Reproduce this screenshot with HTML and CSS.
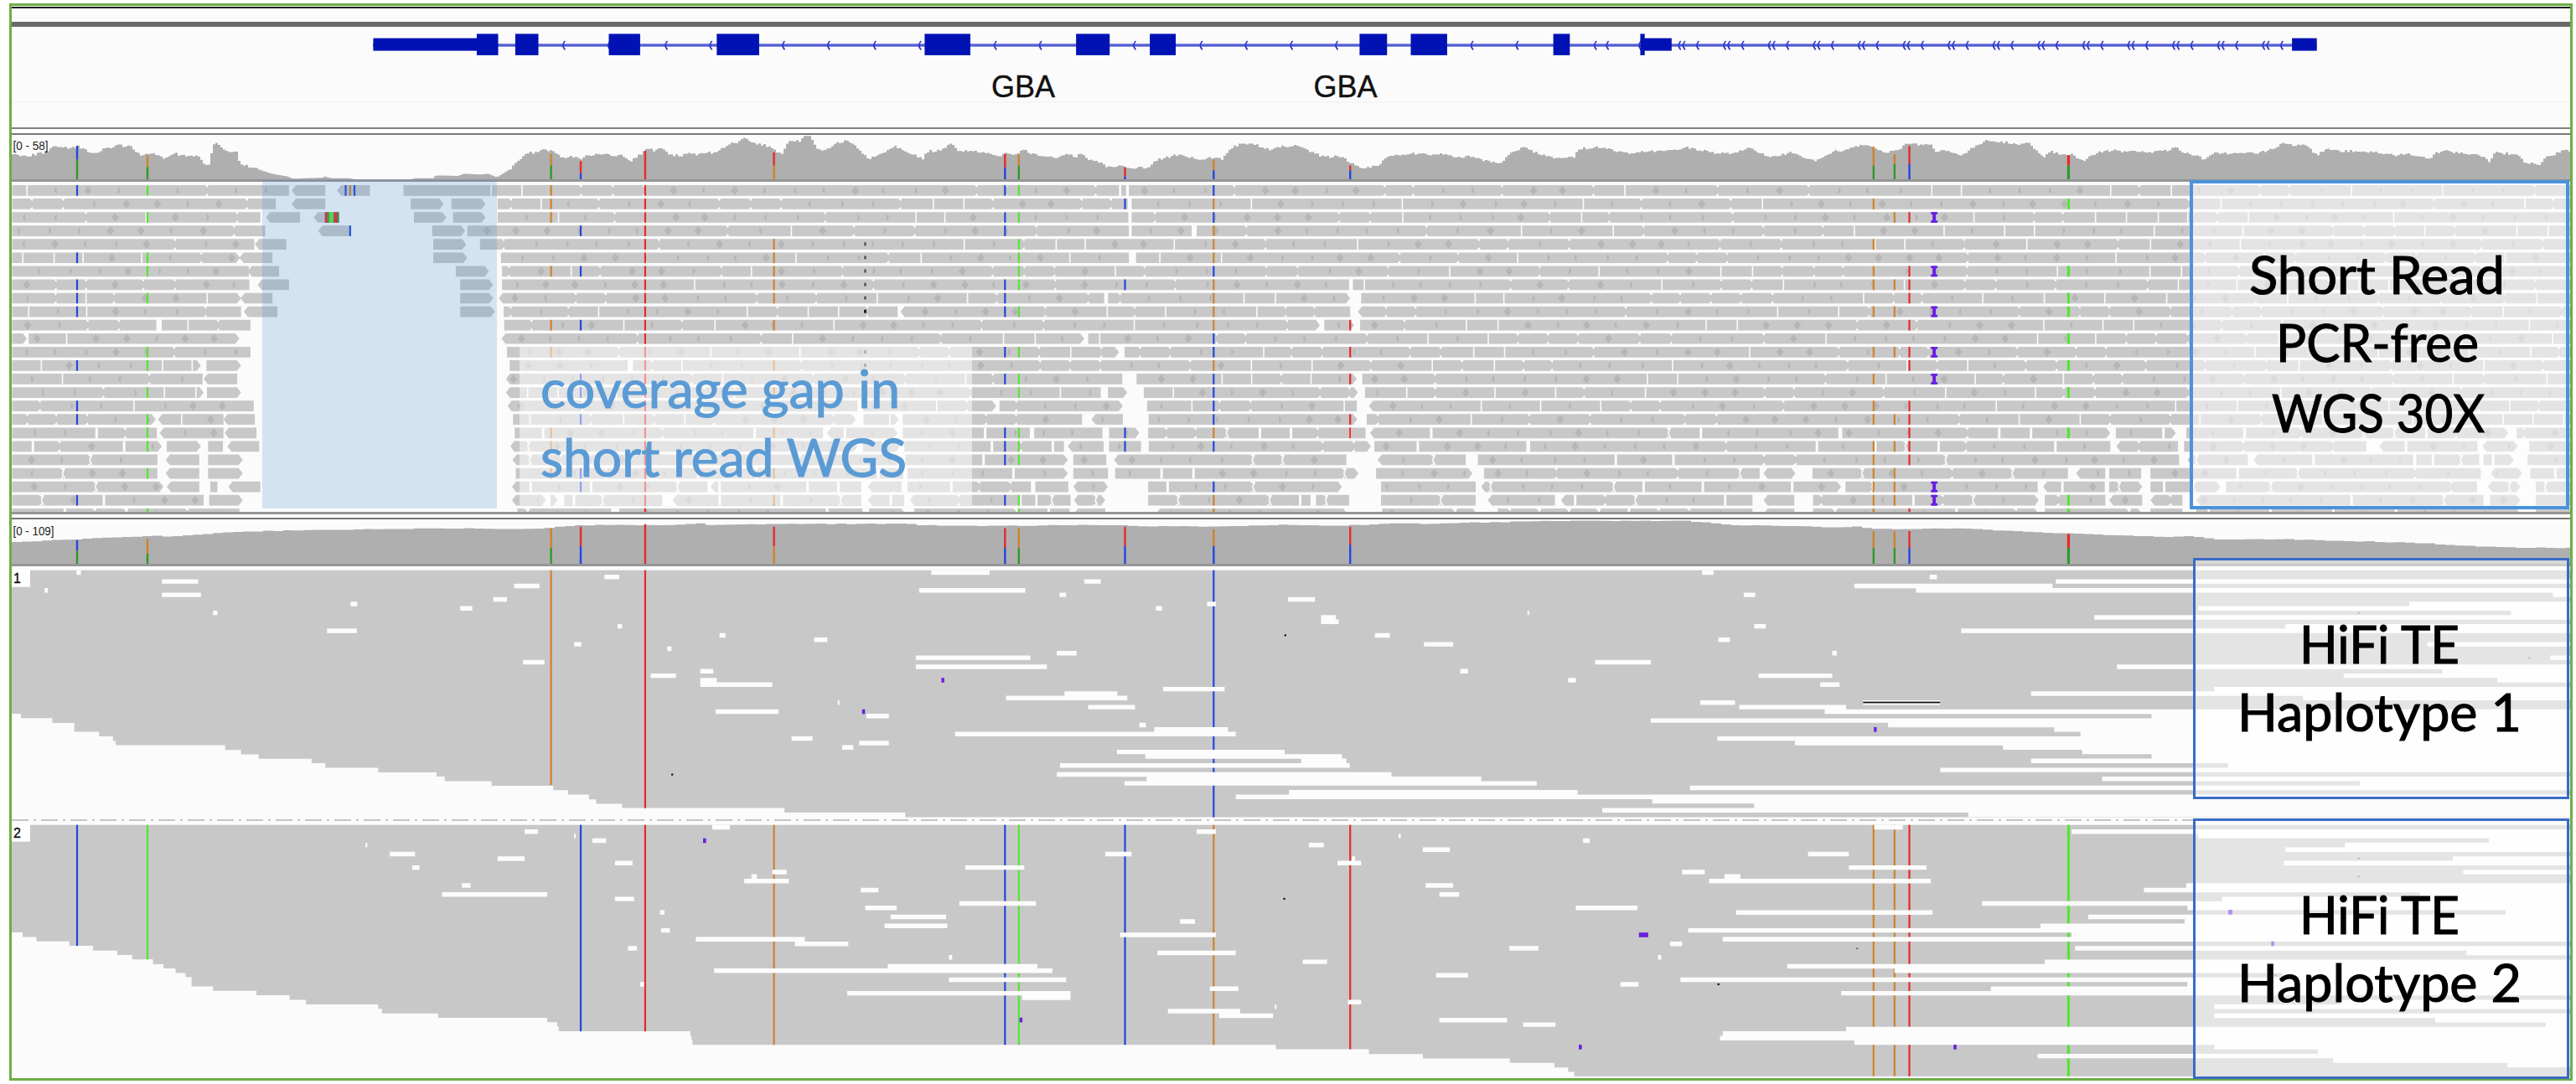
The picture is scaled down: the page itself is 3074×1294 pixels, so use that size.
FILE: index.html
```html
<!DOCTYPE html>
<html lang="en">
<head>
<meta charset="utf-8">
<title>GBA coverage</title>
<link rel="stylesheet" href="styles.css">
</head>
<body>
<main class="viewer">
  <div class="ruler"></div>
  <section class="genes"><svg id="genes" viewBox="14 32 3053 120"></svg></section>
  <section class="coverage"><svg id="cov-short" viewBox="14 161 3053 53"></svg></section>
  <section class="reads"><svg id="reads" viewBox="14 217 3053 394"></svg></section>
  <section class="coverage coverage-hifi"><svg id="cov-hifi" viewBox="14 620 3053 53"></svg></section>
  <section class="haplotype"><svg id="hap1" viewBox="14 676 3053 304"></svg></section>
  <section class="haplotype"><svg id="hap2" viewBox="14 980 3053 307"></svg></section>

  <div class="gap-shade"></div>
  <div class="note note-gap">
    <svg viewBox="620 413 540 190">
      <text x="645" y="487" textLength="429" lengthAdjust="spacingAndGlyphs">coverage gap in</text>
      <text x="645" y="569" textLength="437" lengthAdjust="spacingAndGlyphs">short read WGS</text>
    </svg>
  </div>
  <div class="note note-short">
    <svg viewBox="2617 219 445 385">
      <text x="2684" y="351" textLength="305" lengthAdjust="spacingAndGlyphs">Short Read</text>
      <text x="2716" y="432" textLength="242" lengthAdjust="spacingAndGlyphs">PCR-free</text>
      <text x="2711" y="516" textLength="254" lengthAdjust="spacingAndGlyphs">WGS 30X</text>
    </svg>
  </div>
  <div class="note note-hap note-hap1">
    <svg viewBox="2620 669 443 282">
      <text x="2744" y="792" textLength="191" lengthAdjust="spacingAndGlyphs">HiFi TE</text>
      <text x="2670" y="873" textLength="339" lengthAdjust="spacingAndGlyphs">Haplotype 1</text>
    </svg>
  </div>
  <div class="note note-hap note-hap2">
    <svg viewBox="2620 980 443 305">
      <text x="2744" y="1114.5" textLength="191" lengthAdjust="spacingAndGlyphs">HiFi TE</text>
      <text x="2670" y="1195.5" textLength="339" lengthAdjust="spacingAndGlyphs">Haplotype 2</text>
    </svg>
  </div>
</main>
<script src="tracks.js"></script>
</body>
</html>
```

FILE: styles.css
```css
* { box-sizing: border-box; }

body {
  margin: 0;
  background: #fff;
  font-family: "Liberation Sans", Arial, sans-serif;
}

svg { display: block; width: 100%; height: 100%; }

.viewer {
  position: relative;
  display: flex;
  flex-direction: column;
  width: 3059px;
  height: 1286px;
  margin: 4px 0 0 11px;
  border: 3px solid #6fae45;
  background: #fff;
}

.ruler {
  height: 24px;
  margin-top: 1px;
  border-top: 2px solid #111;
  border-bottom: 6px solid #6a6a6a;
  background: #fbfbfb;
}

.genes {
  height: 122px;
  border-bottom: 2px solid #808080;
  background: #fbfbfb;
}

.coverage {
  height: 58px;
  margin-top: 5px;
  border-top: 2px solid #777;
  border-bottom: 3px solid #969696;
  background: #fbfbfb;
}

.coverage-hifi { margin-top: 4px; }

.reads {
  height: 397px;
  border-bottom: 3px solid #969696;
  background: #fbfbfb;
}

.haplotype { flex: 304 0 0; background: #fbfbfb; }
.haplotype + .haplotype { flex-grow: 307; }

.gene-name { font-size: 36.5px; fill: #111; stroke: #111; stroke-width: 0.4px; }
.range { font-size: 14px; fill: #222; }
.group { font-size: 16px; fill: #111; stroke: #111; stroke-width: 0.4px; }

/* Callouts lie over the tracks */
.gap-shade {
  position: absolute;
  left: 299px;
  top: 208px;
  width: 280px;
  height: 392px;
  background: rgba(62, 137, 210, 0.2);
}

.note {
  position: absolute;
  background: rgba(255, 255, 255, 0.5);
  font-family: Lato, Carlito, sans-serif;
  font-size: 61px;
  fill: #000;
  stroke: #000;
  stroke-width: 1.1px;
}

.note-gap {
  left: 606px;
  top: 406px;
  width: 540px;
  height: 190px;
  fill: #5b9bd5;
  stroke: #5b9bd5;
}

.note-short {
  left: 2599px;
  top: 208px;
  width: 453px;
  height: 393px;
  border: 4px solid #4a93dc;
}

.note-hap {
  left: 2603px;
  width: 449px;
  border: 3px solid #3a6bc5;
}

.note-hap1 { top: 659px; height: 288px; }
.note-hap2 { top: 970px; height: 311px; }
```

FILE: tracks.js
```javascript
// Positions are stored per window of the locus (a, b, c), in window units.
const UNIT = 0.6569;
const START = { a: 0, b: 1020, c: 2044 };
const px = (win, v) => START[win] + v * UNIT;
const COLORS = { r: '#e8292b', g: '#2f9a2a', b: '#2446e0', o: '#cf822c', l: '#55e534' };
const LEFT = 14, RIGHT = 3067;

const rect = (x, y, w, h, fill) =>
  `<rect x="${x.toFixed(1)}" y="${y.toFixed(1)}" width="${w.toFixed(1)}" height="${h.toFixed(1)}" fill="${fill}"/>`;
const path = (d, fill) => `<path d="${d}" fill="${fill}"/>`;
const label = (x, y, w, cls, s) =>
  `<text x="${x}" y="${y}" class="${cls}"${w ? ` textLength="${w}" lengthAdjust="spacingAndGlyphs"` : ''}>${s}</text>`;
const put = (id, html) => { document.getElementById(id).innerHTML = html; };

let seed = 7;
const rnd = () => { seed = (seed * 1103515245 + 12345) % 2147483648; return seed / 2147483648; };

// ---------- gene model ----------
(function genes() {
  let s = rect(LEFT, 121.5, RIGHT - LEFT, 1, '#efefef');
  s += rect(445, 52.3, px('c', 1097) - 445, 3.4, '#5560d4');
  const arrows = { a: [1021, 1103, 1207, 1288, 1420, 1502],
    b: [33, 115, 252, 334, 505, 626, 708, 790, 872, 1118, 1200, 1342, 1364, 1423, 1495, 1503, 1528], c: [] };
  for (let k = 0; k < 13; k++) arrows.c.push(18 + 81.6 * k, 26 + 81.6 * k, 51 + 81.6 * k);
  for (const w in arrows) for (const v of arrows[w]) {
    const x = px(w, v);
    s += `<path d="M${x + 3.6} 49 Q${x - 1.4} 54 ${x + 3.6} 59.5" fill="none" stroke="#2a36c4" stroke-width="1.7"/>`;
  }
  const utr = [['a', 678, 870], ['b', 1433, 1484], ['c', 1052, 1097]];
  const exons = [['a', 866, 905], ['a', 936, 978], ['a', 1106, 1163], ['a', 1302, 1379], ['b', 127, 210],
    ['b', 402, 463], ['b', 536, 583], ['b', 917, 967], ['b', 1010, 1076], ['b', 1269, 1299], ['b', 1427, 1435]];
  for (const [w, p, q] of utr) s += rect(px(w, p), 45.6, (q - p) * UNIT, 15, '#0012b4');
  for (const [w, p, q] of exons) s += rect(px(w, p), 40.4, (q - p) * UNIT, 25.5, '#0012b4');
  s += label(1183, 115.7, 76, 'gene-name', 'GBA') + label(1567.5, 115.7, 76, 'gene-name', 'GBA');
  put('genes', s);
})();

// ---------- coverage ----------
function profile(text, toY) {
  const pts = [];
  for (const part of text.trim().split('|')) {
    const [w, body] = part.trim().split('=');
    for (const p of body.trim().split(/\s+/)) { const [v, y] = p.split(':').map(Number); pts.push([px(w, v), toY(y)]); }
  }
  return pts;
}
function area(pts, base, step, noise) {
  let d = `M${LEFT} ${base}`, k = 0;
  for (let x = LEFT; x < RIGHT; x += step) {
    while (k < pts.length - 2 && pts[k + 1][0] < x) k++;
    const [x0, y0] = pts[k], [x1, y1] = pts[k + 1];
    const t = Math.min(1, Math.max(0, (x - x0) / (x1 - x0 || 1)));
    let y = y0 + (y1 - y0) * t;
    if (base - y > 12) y += (rnd() - 0.5) * noise;
    d += `V${y.toFixed(1)}H${Math.min(x + step, RIGHT)}`;
  }
  return path(d + `V${base}Z`, '#afafaf');
}
function alleles(list, toY, base) {
  let s = '';
  for (const [w, v, top, c1, mid, c2] of list) {
    const wd = w === 'c' && v === 646 ? 3.2 : 2.4, x = px(w, v) - wd / 2, yt = toY(top), ym = mid ? toY(mid) : base;
    s += rect(x, yt, wd, ym - yt, COLORS[c1]);
    if (mid) s += rect(x, ym, wd, base - ym, COLORS[c2]);
  }
  return s;
}

const shortProfile = profile(`
a= 22:552 50:558 66:550 85:543 98:522 110:524 120:532 140:525 160:545 175:545 190:532 205:528 213:515 225:525 235:522 245:545 255:555 275:548 295:568 310:556 316:548 325:558 350:556 360:562 368:585 378:592 381:590 383:520 388:514 400:525 412:545 428:545 435:590 455:598 475:612 495:624 520:632 530:640 585:636 588:632 600:638 635:638 640:643 745:643 750:638 785:638 790:628 830:630 840:622 870:625 885:622 900:635 905:630 925:605 945:565 960:547 975:545 985:530 1005:545 1020:565 1035:558 1055:568 1065:555 1080:553 1095:556 1105:550 1112:562 1125:555 1145:575 1165:548 1175:530 1185:540 1200:530 1215:552 1235:560 1250:545 1260:555 1280:545 1300:548 1320:518 1335:512 1350:496 1370:515 1390:520 1410:545 1420:550 1430:510 1450:505 1460:490 1470:488 1480:525 1495:542 1515:515 1535:505 1550:520
| b= 0:525 25:570 45:550 70:522 90:538 110:560 122:570 130:542 155:540 173:515 185:538 210:540 240:552 258:560 275:545 290:552 308:536 320:553 345:558 360:568 380:553 400:560 410:552 430:578 445:582 458:598 480:590 500:603 530:598 550:570 580:556 605:562 630:575 640:565 665:570 680:530 700:515 730:520 752:538 775:525 800:522 820:540 850:562 880:560 900:582 920:602 945:595 970:558 990:553 1010:550 1040:553 1070:550 1085:565 1110:560 1130:570 1160:583 1175:578 1190:545 1213:530 1235:545 1260:562 1290:566 1305:560 1315:533 1345:528 1370:535 1400:550 1440:543 1480:540 1510:527 1530:538 1555:545
| c= 0:548 30:548 65:532 80:545 105:562 125:555 140:545 160:565 185:578 200:562 220:540 240:538 255:522 290:525 310:548 335:540 348:512 375:520 395:518 403:546 420:540 450:556 470:530 495:502 510:508 530:510 550:515 572:515 600:560 610:540 625:550 650:553 670:575 700:545 725:538 750:545 770:542 800:545 820:540 840:528 855:548 880:560 890:570 905:548 930:550 960:545 980:550 1005:540 1020:530 1033:512 1045:520 1075:522 1095:555 1115:532 1140:542 1160:540 1200:545 1240:558 1260:548 1300:570 1310:548 1330:538 1355:548 1380:553 1395:558 1408:578 1420:545 1440:550 1460:555 1475:585 1500:588 1510:565 1530:550 1545:538 1557:540`, y => y / 3);
put('cov-short', area(shortProfile, 214, 3, 3) + alleles([
  ['a', 140, 522, 'b', 572, 'g'], ['a', 268, 555, 'o', 598, 'g'], ['a', 1001, 551, 'o', 593, 'g'],
  ['a', 1055, 577, 'r', 620, 'b'], ['a', 1172, 540, 'r'], ['a', 1406, 546, 'r', 593, 'o'],
  ['b', 273, 551, 'r', 600, 'b'], ['b', 298, 553, 'o', 593, 'g'], ['b', 491, 599, 'r', 632, 'b'],
  ['b', 652, 572, 'o', 610, 'b'], ['b', 900, 593, 'r', 610, 'b'], ['c', 292, 525, 'o', 593, 'g'],
  ['c', 330, 552, 'o', 588, 'g'], ['c', 357, 523, 'r', 588, 'b'], ['c', 646, 556, 'r', 593, 'g'],
], y => y / 3, 214) + label(15.5, 179, 42, 'range', '[0 - 58]'));

const V = 0.4362, toY2 = y => 610 + y * V;
const hifiProfile = profile(`
a= 22:85 66:82 131:77 201:72 278:68 300:71 348:65 409:59 469:55 590:52 648:50 790:47 852:48 952:49 990:46 1016:41 1045:39 1160:38 1225:38 1262:33 1270:38 1425:35
| b= 0:35 90:35 111:38 190:41 318:40 416:38 547:42 696:42 700:39 787:38 850:41 920:38 975:33 1034:35 1110:32 1268:27 1500:27
| c= 0:34 20:38 140:41 205:45 257:43 293:50 405:48 450:48 526:54 596:59 696:65 800:71 857:69 910:78 1030:77 1140:82 1268:87 1328:92 1372:96 1443:100 1557:101`, toY2);
put('cov-hifi', area(hifiProfile, 673, 12, 0.8) + alleles([
  ['a', 140, 80, 'b', 109, 'g'], ['a', 268, 76, 'o', 117, 'g'], ['a', 1001, 47, 'o', 101, 'g'],
  ['a', 1055, 43, 'r', 96, 'b'], ['a', 1172, 36, 'r'], ['a', 1406, 43, 'r', 96, 'o'],
  ['b', 273, 47, 'r', 101, 'b'], ['b', 298, 47, 'o', 100, 'g'], ['b', 491, 43, 'r', 96, 'b'],
  ['b', 652, 50, 'o', 96, 'b'], ['b', 900, 43, 'r', 92, 'b'], ['c', 292, 55, 'o', 101, 'g'],
  ['c', 330, 55, 'o', 101, 'g'], ['c', 357, 55, 'r', 101, 'b'], ['c', 646, 63, 'r', 101, 'g'],
], toY2, 673) + label(15.5, 638.7, 49, 'range', '[0 - 109]'));

// ---------- short reads ----------
(function reads() {
  const H = 12.7, PITCH = 16.08, TOP = 221;
  // "<" and ">" give the pointed end of a block; the last value starts the part right of the gap
  const rows = [
    '22-525 <530-591 <612-672 733-787 787-845 845', '22-501 <530-591 >746-806 >820-882 904',
    '22-473 <483-545 <570-615 >752-811 >823-882 904', '22-482 <578-638 >785-845 849',
    '22-462 <463-520 >787-847 872', '>22-436 <435-495 >787-849 910', '22-452 <450-507 >828-888 912',
    '22-453 <468-525 >836-896 912', '>22-438 <437-495 >836-896 <906', '22-438 <443-504 >836-899 915',
    '22-284 294-455 916', '>22-49 >52-435 <911', '22-455 921', '>22-365 >375-438 926', '22-368 <370-431 <919',
    '>22-370 >376-438 <919', '22-461 <922', '>22-283 <287-406 <406-463 932', '22-285 <290-406 <408-466 935',
    '>22-294 >303-365 378-405 <413-471 <927', '22-286 <301-362 >378-441 <931', '22-286 <301-362 >378-441 937',
    '>22-297 <303-362 382-395 <415-473 <930', '22-370 >380-441 <930', '22-435 940'];
  const gaps = {
    0: 'b480-484 b493-498', 1: 'b496-503', 2: 'b497-503', 3: 'b498-503 b612-621', 5: 'b498-511', 7: 'b898-905',
    8: 'b453-460 b900-920', 9: 'b900-914 b78-83', 10: 'b845-853 b907-918', 11: 'b417-424', 12: 'b480-490',
    13: 'a1140-1150', 14: 'b486-512 b912-922', 15: 'b447-460 b495-525 b914-927',
    16: 'b5-15 b257-263 b487-531 b912-934', 17: 'b2-16 b80-87 b413-430 b487-534 b913-930',
    18: 'a1495-1502 b78-87 b318-326 b450-462 b517-533 b928-936 c228-235 c722-732 c841-860 c1445-1460',
    19: 'b5-15 b82-90 b380-387 b452-462 b520-534 b938-944 b1220-1227 c722-733 c845-856 c1187-1211 c1389-1398 c1462-1483',
    20: 'b84-92 b387-397 b457-471 b893-950 b1110-1132 c847-862 c972-982 c1272-1278 c1392-1400 c1455-1480',
    21: 'b88-96 b387-397 b460-473 b915-947 b1122-1143 c85-92 c150-181 c645-660 c713-720 c778-795 c1395-1413 c1470-1485',
    22: 'a1285-1291 b12-24 b85-96 b320-328 b388-397 b460-533 b885-956 b1128-1138 c233-241 c590-600 c712-720 c780-795 c922-932 c1388-1408 c1467-1495',
    23: 'a992-1000 a1013-1025 a1203-1222 b12-24 b90-100 b328-332 b392-398 b455-533 b828-838 b898-956 b1128-1150 b1272-1283 c72-92 c148-182 c592-603 c713-720 c780-795 c853-878 c1400-1412 c1467-1495',
    24: 'a1110-1125 b14-26 b92-108 b390-398 b455-547 b895-958 b1130-1168 c72-92 c148-182 c592-603 c780-795 c853-878 c1467-1495' };
  let body = '', white = '', dark = '';
  const block = (x0, x1, y, left, right) => {
    const n = 5, m = y + H / 2, b = y + H;
    body += left ? `M${x0} ${m}L${x0 + n} ${y}` : `M${x0} ${y}`;
    body += right ? `H${x1 - n}L${x1} ${m}L${x1 - n} ${b}` : `H${x1}V${b}`;
    body += left ? `H${x0 + n}Z` : `H${x0}Z`;
  };
  const marks = (x0, x1, y, low) => {
    const m = y + H / 2, b = y + H;
    let x = x0 + 8 + rnd() * 28;
    while (x < x1 - 8) {
      const k = rnd(), n = 3;
      if (k < 0.15) white += `M${x} ${y}h${low ? 3 : 1.6}V${b}h-${low ? 3 : 1.6}Z`;
      else if (k < 0.38) dark += `M${x} ${y + 1}l4.5 ${m - y - 1}l-4.5 ${b - m - 1}l-4.5 -${b - m - 1}Z`;
      else if (k < 0.57) dark += `M${x} ${y + 2}q6 ${m - y - 2} 0 ${H - 4}Z`;
      else if (k < 0.76) dark += `M${x} ${y + 2}q-6 ${m - y - 2} 0 ${H - 4}Z`;
      else {
        const g = low ? n + 1 : n;
        white += `M${x - g} ${y}h${g + 1}l-1 3ZM${x - g} ${b}h${g + 1}l-1 -3Z`;
        if (low && k > 0.88) white += `M${x} ${y}h3l-3 ${m - y}l3 ${b - m}h-3l-1.5 -${b - m}Z`;
      }
      x += 34 + rnd() * 4;
    }
  };
  rows.forEach((row, i) => {
    const y = TOP + i * PITCH, parts = row.split(' ');
    parts.forEach((p, j) => {
      const dir = /[<>]/.test(p[0]) ? p[0] : '', [s, e] = p.replace(dir, '').split('-').map(Number);
      if (e !== undefined) {
        const x0 = px('a', s), x1 = px('a', e);
        block(x0, x1, y, dir === '<', dir === '>');
        if (j === 0 || e - s > 90) marks(x0, x1, y, i > 17);
        return;
      }
      let x = px('a', s), first = dir === '<';
      const cuts = (gaps[i] || '').split(' ').filter(Boolean).map(g => {
        const [p0, p1] = g.slice(1).split('-').map(Number);
        return [px(g[0], p0), px(g[0], p1)];
      });
      cuts.sort((p, q) => p[0] - q[0]);
      for (const [g0, g1] of [...cuts, [RIGHT, RIGHT]]) {
        const end = i > 7 && g0 !== RIGHT && rnd() > 0.6;
        block(x, g0, y, first, end);
        marks(x, g0, y, i > 17);
        x = g1; first = i > 7 && !end && rnd() > 0.4;
      }
    });
  });
  let s = path(body, '#c8c8c8') + path(dark, '#b6b6b6') + path(white, '#fbfbfb');

  const all = rows.map((_, i) => i);
  const snps = [
    ['a', 140, 'b', [0, 5, 7, 8, 9, 13, 16, 17, 23]], ['a', 268, 'l', [0, 2, 5, 6, 8, 12, 13, 15, 17, 18, 19, 21, 24]],
    ['a', 1001, 'o', [0, 1, 2, 6, 10, 12, 18, 19, 21]], ['a', 1055, 'b', [3, 6, 10, 14, 15, 17, 21, 22]],
    ['a', 1172, 'r', all], ['a', 1406, 'o', [4, 5, 6, 7, 8, 10, 13, 15, 18, 21, 23]],
    ['b', 273, 'b', [0, 2, 3, 7, 8, 9, 12, 14, 18, 19, 20, 23]],
    ['b', 298, 'l', [0, 2, 4, 5, 6, 7, 9, 12, 14, 15, 18, 19, 20, 23, 24]], ['b', 491, 'b', [1, 7, 18, 19]],
    ['b', 652, 'b', [0, 2, 6, 11, 12, 14, 15, 16, 17, 19, 22]], ['b', 652, 'o', [1, 3, 4, 5, 7, 8, 9, 10, 13, 18, 23, 24]],
    ['b', 900, 'r', [10, 12, 14, 17, 18]], ['c', 292, 'o', [1, 4, 6, 7, 9, 12, 14, 16, 17, 19, 20, 21, 22, 23, 24]],
    ['c', 330, 'o', [2, 7, 9, 12, 17, 19, 21, 22, 23]], ['c', 357, 'r', [2, 6, 7, 8, 10, 12, 13, 16, 17, 18, 19, 20, 24]],
    ['c', 646, 'l', [1, 6, 8, 9, 11, 13, 15, 18, 23, 24]], ['a', 628, 'b', [0]], ['a', 636, 'o', [0]],
    ['a', 644, 'b', [0]], ['a', 636, 'b', [3]]];
  for (const [w, v, c, list] of snps) {
    const wd = v === 646 ? 3.2 : 2.2;
    for (const i of list) s += rect(px(w, v) - wd / 2, TOP + i * PITCH, wd, H, COLORS[c]);
  }
  const y2 = TOP + 2 * PITCH;
  [[590, 5, 'r'], [595, 3, 'g'], [598, 8, 'l'], [606, 8, 'r'], [613, 3, 'g']].forEach(([v, n, c]) => {
    s += rect(px('a', v), y2, n * UNIT, H, COLORS[c]);
  });
  for (const i of [2, 6, 9, 12, 14, 22, 23]) {
    const y = TOP + i * PITCH, x = px('c', 402);
    s += rect(x - 4, y, 8, 2.6, '#6a1fe0') + rect(x - 2, y, 4, H, '#6a1fe0') + rect(x - 4, y + H - 2.6, 8, 2.6, '#6a1fe0');
  }
  for (const i of [4, 5, 6, 7, 8, 9, 12, 13]) s += rect(px('b', 17), TOP + i * PITCH + 4, 2.5, 4, i === 9 ? '#000' : '#555');
  put('reads', s);
})();

// ---------- phased long reads ----------
function haplotype(top, steps, base, gapText, lines, inserts, dots, name) {
  const ROW = 12.28;
  let d = `M${LEFT} ${toY2(top)}`;
  for (const st of steps.split(' ')) {
    const [v, y] = st.slice(1).split(':').map(Number);
    d += `V${toY2(y).toFixed(1)}H${px(st[0], v).toFixed(1)}`;
  }
  let s = path(d + `V${toY2(base)}H${RIGHT}V${toY2(top)}Z`, '#c8c8c8');
  for (const [w, v, c, end] of lines) {
    const wd = v === 646 ? 3.2 : 2.2;
    s += rect(px(w, v) - wd / 2, toY2(top), wd, (end - top) * V, COLORS[c]);
  }
  let white = '';
  for (const line of gapText.trim().split('\n')) {
    const w = line.trim()[0];
    for (const item of line.trim().slice(2).split(' ')) {
      const [y, spans] = item.split(':');
      const row = Math.round((y - top - 6) / ROW), yy = toY2(top + row * ROW);
      for (const sp of spans.split(',')) {
        const [p, q] = sp.split('-').map(Number), x1 = q ? px(w, q) : RIGHT;
        white += `M${px(w, p).toFixed(1)} ${yy.toFixed(1)}H${x1.toFixed(1)}v${(ROW * V + 0.1).toFixed(2)}H${px(w, p).toFixed(1)}Z`;
      }
    }
  }
  s += path(white, '#fcfcfc');
  for (const [w, v, y, n] of inserts) s += rect(px(w, v) - n / 2, toY2(y) - 2.8, n, 5.6, '#6a1fe0');
  for (const [w, v, y, c] of dots) s += rect(px(w, v) - 1, toY2(y) - 1, 2.2, 2.2, c);
  s += rect(LEFT, toY2(top) - 1, 22, 21, '#fff') + label(16, toY2(top + 36), 0, 'group', name);
  return s;
}

const hap1 = haplotype(162,
  'a38:555 a95:567 a135:580 a180:604 a205:617 a210:629 a409:641 a438:654 a470:666 a566:678 a591:690 a687:703 a793:715 a808:727 a893:739 a1005:752 a1032:764 a1070:776 a1083:789 a1130:801 a1425:813 b92:825',
  838, `
a 168:139-147 180:1098-1125 192:294-360 205:934-980 217:81-87 230:294-365 242:896-921 254:637-649 266:836-858 279:387-395 316:1122-1130 328:594-648 340:1307-1318 352:1479-1503 365:1043-1056 377:1212-1220 414:950-989 439:1272-1296 451:1182-1228 463:1272-1302 475:1272-1403 525:1522-1525 549:1300-1414 623:1438-1476 648:1530-1550
b 168:139-245,1539-1560 192:417-447 217:117-310 230:372-384 242:787-836 254:640-656 266:547-558 291:847-874 303:847-879 279:1222-1225 340:945-972 365:1034-1087 389:367-403 402:111-319 426:111-349 414:1345-1446 439:1100-1114 463:1296-1310 488:560-672 500:381-477 512:275-495 525:1536-1599 537:424-509 562:21-62 574:1446 586:517-529 598:544-678 611:182-692 635:8-62 660:476-781 672:528-885 684:811-893 697:373-899 721:367-975 734:530-1138 746:490-1239 758:1517 770:789-1313 783:692 795:1449 820:1358
c 180:394-407 192:623 205:257-617 217:369 230:56-77,1526 254:1265 266:882 279:1450 291:693 316:75-96,1040 328:451 352:10-31 365:1298 389:217-225 402:1521 426:734 439:1325 451:83-217,1146 463:1425 475:195-230 488:911 500:578 512:1072 525:273-413 537:48-242 549:203 562:797 586:318 598:620 611:668 623:8 635:149 648:527 660:671 672:797 684:578 697:936 709:413 734:707 746:1175 807:75 832:464`,
  [['a', 1001, 'o', 750], ['a', 1172, 'r', 813], ['b', 652, 'b', 838]],
  [['b', 160, 463, 3.4], ['b', 16, 549, 3.4], ['c', 295, 598, 3.4]],
  [['a', 1221, 721, '#111'], ['b', 782, 340, '#111'], ['c', 1173, 279, '#777'], ['c', 1483, 402, '#777']], '1');
put('hap1', hap1 + rect(px('c', 273), 837.6, 140 * UNIT, 1.8, '#111') +
  '<path d="M14 979H3067" stroke="#c4c4c4" stroke-width="2" stroke-dasharray="20 6 3 6"/>');

put('hap2', haplotype(859,
  'a41:1153 a66:1166 a126:1178 a169:1190 a213:1203 a240:1215 a278:1227 a297:1240 a319:1252 a337:1264 a348:1276 a387:1301 a466:1313 a526:1325 a556:1338 a687:1350 a694:1362 a796:1375 a994:1387 a1012:1399 a1015:1411 a1254:1424 a1256:1436 a1258:1448 b765:1461 b934:1473 b1032:1486 b1190:1498 b1271:1510 b1296:1523 b1307:1535',
  1547, `
a 865:1294-1326 877:953-977 889:1043-1046 902:1076-1101 914:664-667 938:708-754 951:904-953 963:1117-1149 975:749-762 988:1403-1429 1000:1365-1375 1012:1352-1433 1024:839-855 1049:803-994 1061:1117-1152 1098:1199-1207 1147:1201-1217 1172:1264-1462 1184:1444-1541 1197:1141-1157 1258:1297-1600 1295:1163-1170 1319:1539-1600
b 877:621-656 889:988-992 902:1323-1335 914:825-852 926:1032-1081 938:455-503 951:903-909 963:877-920 975:201-308 988:1503-1544 1012:1552-1600 1024:1037-1087 1037:11-43 1049:1062-1098 1074:190-329 1086:19-76,1310-1422 1110:65-166 1123:591-618 1135:54-168 1147:1514 1160:482-656 1184:1481-1503 1197:1189-1242 1209:550-692 1221:171-177,1459-1465 1233:814-858 1246:60-332 1258:0-359 1270:1056-1114 1283:171-384,1500 1295:1391-1424 1307:645-697 1319:0-392 1332:304-392 1344:896-920 1356:763-766 1369:569-700 1381:662-760 1393:1062-1185 1406:1214-1273
c 865:293-345 877:652 889:882 902:1410 914:1148 926:1040 938:173-247 951:1344 963:1037 975:247-388 988:1363 1000:21-50 1012:0-396 1024:860 1037:783 1049:1284 1061:925 1074:489 1086:862 1098:42-399,1440 1110:682 1123:857 1135:595 1160:652 1172:18 1197:658 1209:1369 1233:603 1246:135 1258:330 1270:1035 1295:862 1307:505 1319:233 1344:1140 1356:911 1381:911 1393:1312 1406:1513 1418:242 1430:18 1442:13 1455:257 1467:911 1479:1099 1492:590 1504:1127 1516:1443`,
  [['a', 140, 'b', 1190], ['a', 268, 'l', 1227], ['a', 1055, 'b', 1424], ['a', 1172, 'r', 1424], ['a', 1406, 'o', 1461],
    ['b', 273, 'b', 1461], ['b', 298, 'l', 1461], ['b', 491, 'b', 1461], ['b', 652, 'o', 1461], ['b', 900, 'r', 1473],
    ['c', 292, 'o', 1547], ['c', 330, 'o', 1547], ['c', 357, 'r', 1547], ['c', 646, 'l', 1547]],
  [['a', 1280, 902, 3.6], ['b', 1433, 1160, 11], ['b', 302, 1393, 3.4], ['b', 1318, 1467, 3.6], ['c', 440, 1467, 3.6],
    ['c', 940, 1098, 5], ['c', 1017, 1184, 3.6]],
  [['b', 780, 1061, '#111'], ['c', 10, 1295, '#000'], ['c', 262, 1197, '#777'], ['c', 1173, 951, '#777'],
    ['c', 1173, 1000, '#777'], ['c', 1022, 1270, '#777']], '2'));
```
